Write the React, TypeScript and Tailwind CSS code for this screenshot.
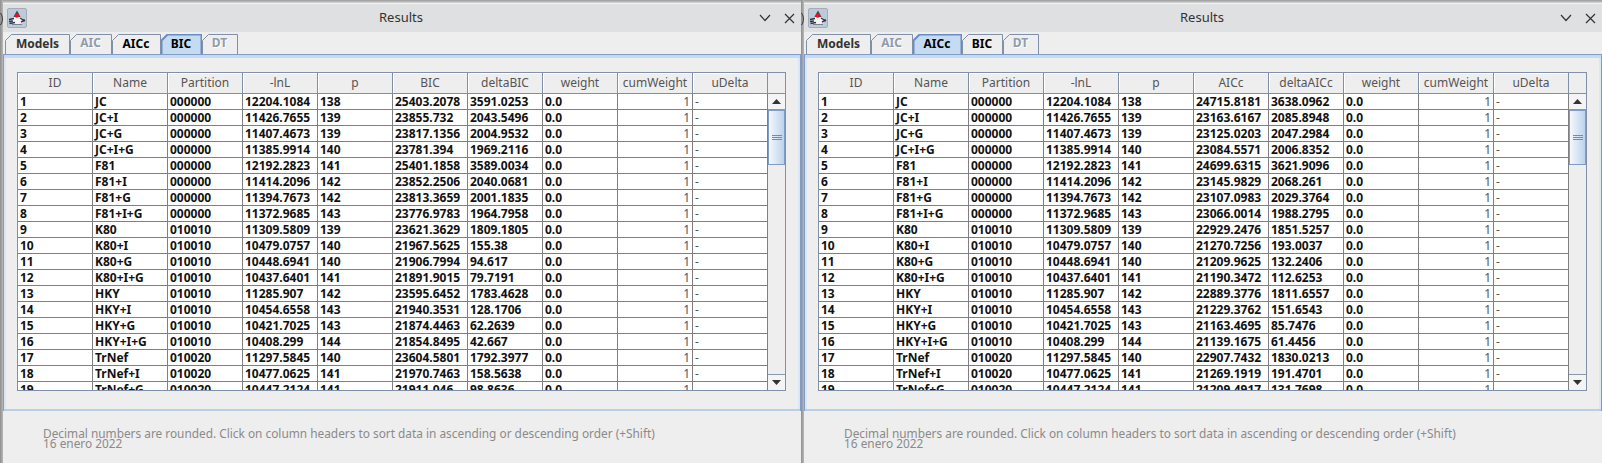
const ids = Array.from({ length: 19 }, (_, i) => i + 1);

const NAMES = ["JC", "JC+I", "JC+G", "JC+I+G", "F81", "F81+I", "F81+G", "F81+I+G", "K80", "K80+I", "K80+G", "K80+I+G", "HKY", "HKY+I", "HKY+G", "HKY+I+G", "TrNef", "TrNef+I", "TrNef+G"];
const PARTITIONS = ["000000", "000000", "000000", "000000", "000000", "000000", "000000", "000000", "010010", "010010", "010010", "010010", "010010", "010010", "010010", "010010", "010020", "010020", "010020"];
const LNL = ["12204.1084", "11426.7655", "11407.4673", "11385.9914", "12192.2823", "11414.2096", "11394.7673", "11372.9685", "11309.5809", "10479.0757", "10448.6941", "10437.6401", "11285.907", "10454.6558", "10421.7025", "10408.299", "11297.5845", "10477.0625", "10447.2124"];
const P = ["138", "139", "139", "140", "141", "142", "142", "143", "139", "140", "140", "141", "142", "143", "143", "144", "140", "141", "141"];

const BIC = ["25403.2078", "23855.732", "23817.1356", "23781.394", "25401.1858", "23852.2506", "23813.3659", "23776.9783", "23621.3629", "21967.5625", "21906.7994", "21891.9015", "23595.6452", "21940.3531", "21874.4463", "21854.8495", "23604.5801", "21970.7463", "21911.046"];
const DELTA_BIC = ["3591.0253", "2043.5496", "2004.9532", "1969.2116", "3589.0034", "2040.0681", "2001.1835", "1964.7958", "1809.1805", "155.38", "94.617", "79.7191", "1783.4628", "128.1706", "62.2639", "42.667", "1792.3977", "158.5638", "98.8636"];
const AICC = ["24715.8181", "23163.6167", "23125.0203", "23084.5571", "24699.6315", "23145.9829", "23107.0983", "23066.0014", "22929.2476", "21270.7256", "21209.9625", "21190.3472", "22889.3776", "21229.3762", "21163.4695", "21139.1675", "22907.7432", "21269.1919", "21209.4917"];
const DELTA_AICC = ["3638.0962", "2085.8948", "2047.2984", "2006.8352", "3621.9096", "2068.261", "2029.3764", "1988.2795", "1851.5257", "193.0037", "132.2406", "112.6253", "1811.6557", "151.6543", "85.7476", "61.4456", "1830.0213", "191.4701", "131.7698"];

const TABS = [
  { label: "Models", width: 65, enabled: true },
  { label: "AIC", width: 42, enabled: false },
  { label: "AICc", width: 49, enabled: true },
  { label: "BIC", width: 41, enabled: true },
  { label: "DT", width: 36, enabled: false },
];

function AppIcon() {
  return (
    <div className="w-5 h-5 rounded-[2px] border border-[#a3adb7] bg-[#bccbda] shrink-0">
      <svg viewBox="0 0 18 18" className="w-full h-full">
        <path d="M3 12 L7 7 L9 3 L11 7 L15 10 L15 14 L11 15 L4 15 Z" fill="#f4f4f4" />
        <path d="M9 1.5 L12.5 8 L5.5 8 Z" fill="#3f454b" />
        <circle cx="8.8" cy="6.5" r="2.3" fill="#e3161e" />
        <path d="M1 10.5 L6 9.5 M1 12.5 L5 12 M1.5 14.5 L7 13.5 M12 9 L17 12 M13 13 L17 11" stroke="#30363c" strokeWidth="1.4" />
        <path d="M4 15.5 H14" stroke="#7d838c" strokeWidth="1" />
      </svg>
    </div>
  );
}

function Tab({ label, width, enabled, selected }: { label: string; width: number; enabled: boolean; selected: boolean }) {
  const stroke = selected ? "#6a8cc6" : "#7f90a8";
  const color = selected || label === "AICc" || label === "BIC" ? "text-black" : enabled ? "text-[#333333]" : "text-[#8f9cad] [text-shadow:1px_1px_0_#ffffff]";
  return (
    <div className={`relative h-[20px] shrink-0 flex items-center justify-center font-bold text-[12px] ${label === "Models" ? "" : "pr-[1px]"} ${color}`} style={{ width }}>
      <svg className="absolute inset-0" width={width} height={20}>
        <path
          d={`M0.5 20 V6.5 L6.5 0.5 H${width - 0.5} V20`}
          fill={selected ? "#c5dbf2" : "#eeeeee"}
          stroke={stroke}
          strokeWidth={selected ? 2 : 1}
        />
      </svg>
      <span className={`relative ${enabled ? "" : "-mt-[2px]"}`}>{label}</span>
    </div>
  );
}

function ScrollButton({ up }: { up: boolean }) {
  return (
    <div className={`h-[16px] shrink-0 flex items-center justify-center bg-[#f4f4f4] ${up ? "border-b" : "border-t"} border-[#8a9aae]`}>
      <svg width="9" height="5" viewBox="0 0 9 5">
        <path d={up ? "M0 5 L4.5 0 L9 5 Z" : "M0 0 L4.5 5 L9 0 Z"} fill="#333333" />
      </svg>
    </div>
  );
}

function Scrollbar() {
  return (
    <div className="w-[17px] shrink-0 flex flex-col bg-[#eeeeee]">
      <ScrollButton up />
      <div className="flex-1 flex flex-col">
        <div className="h-[55px] flex flex-col items-center justify-center gap-[1px] border border-[#7f9cc7] bg-gradient-to-r from-[#f4f8fc] to-[#bcd3ec]">
          <div className="w-[10px] h-[1px] bg-[#6a8cc6]" />
          <div className="w-[10px] h-[1px] bg-[#6a8cc6]" />
          <div className="w-[10px] h-[1px] bg-[#6a8cc6]" />
        </div>
      </div>
      <ScrollButton up={false} />
    </div>
  );
}

function ResultsTable({ scoreName, scores, deltas }: { scoreName: string; scores: string[]; deltas: string[] }) {
  const headers = ["ID", "Name", "Partition", "-lnL", "p", scoreName, `delta${scoreName}`, "weight", "cumWeight", "uDelta"];
  return (
    <div className="w-[769px] h-[319px] flex flex-col border border-[#7f90a8] overflow-hidden">
      <div className="h-[21px] shrink-0 flex border-b border-[#7f90a8]">
        {headers.map((h) => (
          <div key={h} className="w-[75px] shrink-0 border-r border-[#7f90a8] flex items-center justify-center text-[12px] text-[#555555] bg-[#eeeeee] shadow-[inset_1px_1px_0_#ffffff]">
            {h}
          </div>
        ))}
      </div>
      <div className="flex-1 flex min-h-0">
        <div className="w-[750px] shrink-0 bg-white overflow-hidden">
          {ids.map((id, i) => {
            const row = [String(id), NAMES[i], PARTITIONS[i], LNL[i], P[i], scores[i], deltas[i], "0.0"];
            return (
              <div key={id} className="h-[16px] flex border-b border-[#808080] text-[12px] leading-[15px]">
                {row.map((v, c) => (
                  <div key={c} className="w-[75px] shrink-0 border-r border-[#808080] pl-[2px] font-bold text-[#111111] whitespace-nowrap">
                    {v}
                  </div>
                ))}
                <div className="w-[75px] shrink-0 border-r border-[#808080] pr-[2px] text-right text-[#555555]">1</div>
                <div className="w-[75px] shrink-0 border-r border-[#808080] pl-[2px] text-[#555555]">{id < 19 ? "-" : ""}</div>
              </div>
            );
          })}
        </div>
        <Scrollbar />
      </div>
    </div>
  );
}

function ResultsWindow({ activeTab, scoreName, scores, deltas }: { activeTab: string; scoreName: string; scores: string[]; deltas: string[] }) {
  return (
    <div className="w-[801px] h-[463px] shrink-0 flex">
      <div className="w-[3px] shrink-0 bg-gradient-to-r from-[#8d8d8d] to-[#b9b9b9] pt-[13px]">
        <svg width="3" height="12" viewBox="0 0 3 12">
          <path d="M0.5 0 C3 3 3 9 0.5 12" fill="none" stroke="#2f2f2f" strokeWidth="1" />
        </svg>
      </div>
      <div className="flex-1 min-w-0 flex flex-col">
        <div className="h-[3px] shrink-0 bg-gradient-to-b from-[#9a9a9a] to-[#d8d8d8]" />
        <div className="h-[29px] shrink-0 flex items-center bg-[#dfe0e1] pl-[4px] pr-[4px] border-t border-[#f3f3f3]">
          <div className="flex-1 flex">
            <AppIcon />
          </div>
          <div className="text-[13px] text-[#333333]">Results</div>
          <div className="flex-1 flex items-center justify-end gap-[13px] pr-[2px]">
            <svg width="12" height="8" viewBox="0 0 12 8">
              <path d="M1 1 L6 6.5 L11 1" fill="none" stroke="#333333" strokeWidth="1.2" />
            </svg>
            <svg width="11" height="11" viewBox="0 0 11 11">
              <path d="M1 1 L10 10 M10 1 L1 10" stroke="#333333" strokeWidth="1.2" />
            </svg>
          </div>
        </div>
        <div className="h-[22px] shrink-0 flex items-end pl-[2px] bg-[#eeeeee]">
          {TABS.map((t) => (
            <Tab key={t.label} label={t.label} width={t.width} enabled={t.enabled} selected={t.label === activeTab} />
          ))}
        </div>
        <div className="h-[357px] shrink-0 flex flex-col border-t border-x border-[#7f9ccb] bg-[#eeeeee]">
          <div className="h-[3px] shrink-0 bg-[#c8daf0]" />
          <div className="flex-1 border-x-2 border-[#dbe6f3] pl-[11px] pt-[14px]">
            <ResultsTable scoreName={scoreName} scores={scores} deltas={deltas} />
          </div>
          <div className="h-[2px] shrink-0 bg-[#b8cfe8]" />
        </div>
        <div className="flex-1 bg-[#eeeeee] pl-[40px] pt-[17px] text-[11.85px] leading-[10px] text-[#8a8a8a]">
          <div>Decimal numbers are rounded. Click on column headers to sort data in ascending or descending order (+Shift)</div>
          <div>16 enero 2022</div>
        </div>
      </div>
    </div>
  );
}

export default function App() {
  return (
    <div className="w-[1602px] h-[463px] flex overflow-hidden font-['Noto_Sans',sans-serif]">
      <ResultsWindow activeTab="BIC" scoreName="BIC" scores={BIC} deltas={DELTA_BIC} />
      <ResultsWindow activeTab="AICc" scoreName="AICc" scores={AICC} deltas={DELTA_AICC} />
    </div>
  );
}
